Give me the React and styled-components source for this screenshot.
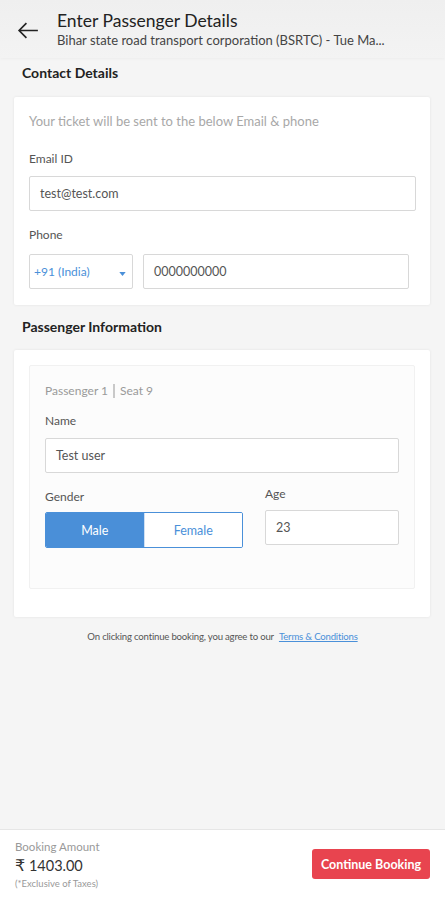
import React from "react";
import styled, { createGlobalStyle } from "styled-components";

const Global = createGlobalStyle`
  html, body {
    margin: 0;
    padding: 0;
    background: #f5f5f5;
    font-family: Lato, "Open Sans", sans-serif;
  }
  * { box-sizing: border-box; }
`;

function App() {
  return (
    <Page>
      <Global />
      <Header>
        <BackArrow viewBox="0 0 24 24">
          <path d="M21 12H3M10 5l-7 7 7 7" />
        </BackArrow>
        <HeaderText>
          <Title>Enter Passenger Details</Title>
          <Subtitle>Bihar state road transport corporation (BSRTC) - Tue Ma...</Subtitle>
        </HeaderText>
      </Header>

      <SectionTitle>Contact Details</SectionTitle>
      <Card>
        <Hint>Your ticket will be sent to the below Email &amp; phone</Hint>
        <Label>Email ID</Label>
        <Field>test@test.com</Field>
        <Label $top={16} $bottom={11}>Phone</Label>
        <PhoneRow>
          <Select>
            +91 (India)
            <Caret viewBox="0 0 8 5">
              <path d="M0 0h8L4 5z" />
            </Caret>
          </Select>
          <Field $width="266px">0000000000</Field>
        </PhoneRow>
      </Card>

      <SectionTitle $top={13} $bottom={14}>Passenger Information</SectionTitle>
      <Card $pad="15px 15px 28px">
        <PassengerBox>
          <PassengerTag>
            Passenger 1 <Divider /> Seat 9
          </PassengerTag>
          <Label $top={13}>Name</Label>
          <Field>Test user</Field>
          <GenderRow>
            <Col>
              <Label $top={0} $bottom={7}>Gender</Label>
              <Toggle>
                <ToggleOption $active>Male</ToggleOption>
                <ToggleOption>Female</ToggleOption>
              </Toggle>
            </Col>
            <Col $grow>
              <Label $top={0} $shift={-3} $bottom={8}>Age</Label>
              <Field>23</Field>
            </Col>
          </GenderRow>
        </PassengerBox>
      </Card>

      <Terms>
        On clicking continue booking, you agree to our <TermsLink>Terms &amp; Conditions</TermsLink>
      </Terms>

      <Footer>
        <Amount>
          <AmountLabel>Booking Amount</AmountLabel>
          <Price>
            <Rupee>₹</Rupee> 1403.00
          </Price>
          <Taxes>(*Exclusive of Taxes)</Taxes>
        </Amount>
        <ContinueButton>Continue Booking</ContinueButton>
      </Footer>
    </Page>
  );
}

export default App;

const Page = styled.div`
  position: relative;
  height: 900px;
  background: #f5f5f5;
  color: #333;
`;

const Header = styled.div`
  display: flex;
  align-items: center;
  gap: 16px;
  height: 58px;
  padding: 6px 16px 0 16px;
  background: linear-gradient(#efefef, #f3f3f3);
  box-shadow: 0 1px 3px rgba(0, 0, 0, 0.04);
`;

const BackArrow = styled.svg`
  width: 25px;
  height: 25px;
  fill: none;
  stroke: #222;
  stroke-width: 1.6;
  margin-top: -3px;
`;

const HeaderText = styled.div`
  display: flex;
  flex-direction: column;
  margin-top: -5px;
`;

const Title = styled.div`
  font-size: 17.5px;
  color: #222;
  line-height: 22px;
`;

const Subtitle = styled.div`
  font-size: 13px;
  color: #444;
  line-height: 17px;
  white-space: nowrap;
`;

const SectionTitle = styled.div`
  font-size: 14px;
  font-weight: 700;
  color: #222;
  padding: ${(p) => p.$top ?? 6}px 22px ${(p) => p.$bottom ?? 15}px;
  line-height: 18px;
`;

const Card = styled.div`
  margin: 0 15px 0 14px;
  background: #fff;
  padding: ${(p) => p.$pad || "15px 14px 16px 15px"};
  box-shadow: 0 0 3px rgba(0, 0, 0, 0.08);
  border-radius: 2px;
`;

const Hint = styled.div`
  font-size: 13px;
  color: #a8a8a8;
  line-height: 18px;
`;

const Label = styled.div`
  font-size: 12px;
  color: #555;
  line-height: 16px;
  margin: ${(p) => (p.$top ?? 21) + (p.$shift || 0)}px 0 ${(p) => p.$bottom ?? 9}px;
`;

const Field = styled.div`
  display: flex;
  align-items: center;
  height: 35px;
  width: ${(p) => p.$width || "100%"};
  padding: 0 10px;
  border: 1px solid #d8d8d8;
  border-radius: 2px;
  background: #fff;
  font-size: 12.5px;
  color: #555;
`;

const PhoneRow = styled.div`
  display: flex;
  gap: 10px;
`;

const Select = styled.div`
  display: flex;
  align-items: center;
  justify-content: space-between;
  width: 104px;
  height: 35px;
  padding: 0 6px 0 4px;
  border: 1px solid #d8d8d8;
  border-radius: 2px;
  font-size: 12px;
  color: #4a90d9;
`;

const Caret = styled.svg`
  width: 7px;
  height: 4px;
  fill: #4a90d9;
  margin-top: 4px;
`;

const PassengerBox = styled.div`
  background: #fcfcfc;
  border: 1px solid #f1f1f1;
  border-radius: 2px;
  padding: 16px 15px 40px;
  min-height: 223px;
`;

const PassengerTag = styled.div`
  display: flex;
  align-items: center;
  gap: 5px;
  font-size: 12px;
  color: #9a9a9a;
  line-height: 18px;
`;

const Divider = styled.span`
  display: inline-block;
  width: 2px;
  height: 14px;
  background: #c9c9c9;
`;

const GenderRow = styled.div`
  display: flex;
  gap: 22px;
  margin-top: 16px;
`;

const Col = styled.div`
  display: flex;
  flex-direction: column;
  flex: ${(p) => (p.$grow ? 1 : "none")};
`;

const Toggle = styled.div`
  display: flex;
  width: 198px;
  height: 36px;
  border: 1px solid #4a90d9;
  border-radius: 2px;
  overflow: hidden;
`;

const ToggleOption = styled.div`
  flex: 1;
  display: flex;
  align-items: center;
  justify-content: center;
  font-size: 12.5px;
  background: ${(p) => (p.$active ? "#4a8fd8" : "#fff")};
  color: ${(p) => (p.$active ? "#fff" : "#4a90d9")};
  border-left: ${(p) => (p.$active ? "none" : "1px solid #cfe0f3")};
`;

const Terms = styled.div`
  text-align: center;
  font-size: 9.6px;
  color: #555;
  margin-top: 14px;
  letter-spacing: -0.2px;
`;

const TermsLink = styled.span`
  color: #4a90d9;
  text-decoration: underline;
  margin-left: 3px;
`;

const Footer = styled.div`
  position: absolute;
  left: 0;
  right: 0;
  bottom: 0;
  height: 71px;
  background: #fff;
  border-top: 1px solid #e6e6e6;
  display: flex;
  align-items: center;
  justify-content: space-between;
  padding: 0 15px;
`;

const Amount = styled.div`
  display: flex;
  flex-direction: column;
`;

const AmountLabel = styled.div`
  font-size: 11.5px;
  color: #999;
  line-height: 14px;
`;

const Price = styled.div`
  font-size: 14.5px;
  color: #333;
  line-height: 23px;
`;

const Rupee = styled.span`
  font-family: "DejaVu Sans", sans-serif;
  font-size: 16px;
`;

const Taxes = styled.div`
  font-size: 9.5px;
  color: #999;
  line-height: 14px;
`;

const ContinueButton = styled.div`
  background: #e8444f;
  color: #fff;
  font-weight: 700;
  font-size: 12.5px;
  height: 30px;
  width: 118px;
  border-radius: 3px;
  display: flex;
  align-items: center;
  justify-content: center;
  margin-top: -2px;
`;
